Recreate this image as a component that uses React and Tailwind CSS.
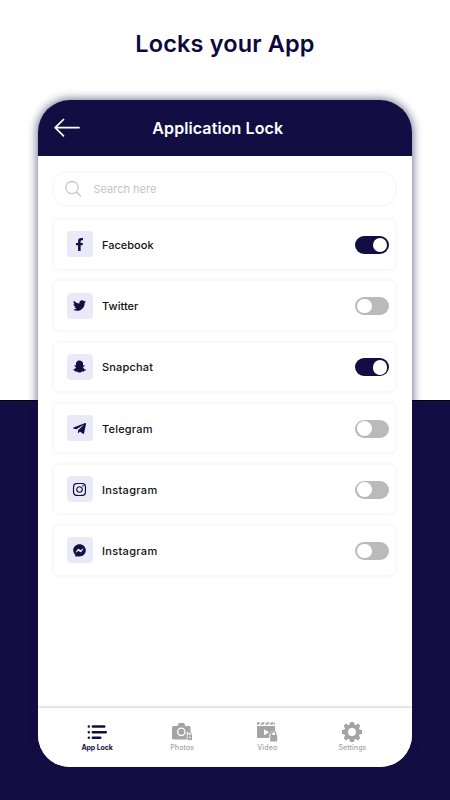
import React from "react";
import { FaFacebookF, FaTwitter, FaSnapchatGhost, FaTelegramPlane, FaInstagram, FaFacebookMessenger } from "react-icons/fa";

const apps = [
  { name: "Facebook", icon: FaFacebookF, on: true, size: 13, tracking: "tracking-[0]" },
  { name: "Twitter", icon: FaTwitter, on: false, size: 13, tracking: "tracking-[0.02px]" },
  { name: "Snapchat", icon: FaSnapchatGhost, on: true, size: 13, tracking: "tracking-[0.17px]" },
  { name: "Telegram", icon: FaTelegramPlane, on: false, size: 15, tracking: "tracking-[0.2px]" },
  { name: "Instagram", icon: FaInstagram, on: false, size: 15, tracking: "tracking-[0.32px]" },
  { name: "Instagram", icon: FaFacebookMessenger, on: false, size: 13, tracking: "tracking-[0.32px]" },
];

function Toggle({ on }) {
  return (
    <div className={"flex h-[18px] w-[34px] items-center rounded-full px-[2px] " + (on ? "justify-end bg-[#120e43]" : "justify-start bg-[#bababa]")}>
      <div className="size-[14.5px] rounded-full bg-white" />
    </div>
  );
}

function AppRow({ app }) {
  const Icon = app.icon;
  return (
    <div className="flex h-[48.5px] items-center rounded-[5px] bg-white pl-[13px] pr-[6px] shadow-[0_0_4px_1px_rgba(0,0,0,0.05)]">
      <div className="flex size-[26px] items-center justify-center rounded-[4px] bg-[#eae9f8] text-[#120e43]">
        <Icon size={app.size} />
      </div>
      <span className={"ml-[9.5px] flex-1 pt-px text-[11px] leading-4 font-medium text-[#111] " + app.tracking}>{app.name}</span>
      <div className="pt-px">
        <Toggle on={app.on} />
      </div>
    </div>
  );
}

function ListIcon() {
  return (
    <svg width="20" height="20" viewBox="0 0 20 20" stroke="#120e43" strokeWidth="2.4" strokeLinecap="round">
      <path d="M1.800 4.500h.01M5.800 4.500h11.500M1.800 10.200h.01M5.800 10.200h13M1.800 15.800h.01M5.800 15.800h7.500" />
    </svg>
  );
}

function CameraIcon() {
  return (
    <svg width="20" height="20" viewBox="0 0 20 20" fill="none">
      <path fill="#a4a4a4" d="M1.500 4h3.800l1.600-3h5l1.600 3h3.800q1.200 0 1.200 1.200V10h-3.800v7.500H1.500Q0 17.500 0 16V5.500Q0 4 1.500 4Z" />
      <circle cx="9.300" cy="9.800" r="3.700" stroke="white" strokeWidth="1.300" />
      <path fill="#a4a4a4" d="M15.500 13h4.500v5h-4.500z" />
      <path stroke="#a4a4a4" d="M16.400 13v-1.300a1.400 1.400 0 0 1 2.800 0V13" />
      <circle cx="17.800" cy="15.400" r=".8" fill="white" />
    </svg>
  );
}

function VideoIcon() {
  return (
    <svg width="21" height="20" viewBox="0 0 21 20" fill="none">
      <path fill="#a4a4a4" d="M0 4h18v12H0z" />
      <path fill="#a4a4a4" d="M0 .3h3.300L1.700 2.800H0zM5 .3h3L6.300 2.800h-3zM9.600 .3h3l-1.700 2.500h-3zM14.200 .3h3l-1.700 2.500h-3zM18 .5v2.300h-1.500z" />
      <path fill="white" d="m7 7.200 5.200 3L7 13.200z" />
      <path fill="white" d="M12.300 12.300h1.300v-.5a3.100 3.100 0 0 1 6.200 0v.5h1.200V20h-8.700z" />
      <path fill="#a4a4a4" d="M13.200 13h7v6.500h-7z" />
      <path stroke="#a4a4a4" strokeWidth="1.300" d="M14.600 13v-1.200a2.100 2.100 0 0 1 4.200 0V13" />
    </svg>
  );
}

function GearIcon() {
  return (
    <svg width="20" height="20" viewBox="0 0 20 20" fill="#a4a4a4">
      <path fillRule="evenodd" d="M8.100 0h3.800l.5 2.500 1.400.6L16 1.600 18.400 4l-1.500 2.200.6 1.400 2.500.5v3.800l-2.500.5-.6 1.400 1.500 2.200-2.400 2.400-2.200-1.500-1.400.6-.5 2.500H8.100l-.5-2.500-1.400-.6L4 18.400 1.600 16l1.500-2.200-.6-1.400L0 11.900V8.100l2.500-.5.600-1.400L1.600 4 4 1.600l2.200 1.500 1.400-.6ZM10 6a4 4 0 1 0 0 8 4 4 0 0 0 0-8Z" />
    </svg>
  );
}

const tabs = [
  { label: "App Lock", icon: ListIcon, style: "font-bold text-[#120e43] tracking-[-0.1px]" },
  { label: "Photos", icon: CameraIcon, style: "font-medium text-[#a4a4a4] tracking-[0.1px]" },
  { label: "Video", icon: VideoIcon, style: "font-medium text-[#a4a4a4] tracking-[0.15px]" },
  { label: "Settings", icon: GearIcon, style: "font-medium text-[#a4a4a4] tracking-[0.1px]" },
];

export default function App() {
  return (
    <div className="h-[800px] w-[450px] overflow-hidden bg-[linear-gradient(to_bottom,#fff_400px,#000_400px,#000_401px,#120e43_401px)] font-['Inter',sans-serif]">
      <h1 className="h-[100px] pt-[28px] text-center text-[23.5px] leading-8 font-semibold tracking-[0.15px] text-[#0d093d]">Locks your App</h1>
      <main className="ml-[37.5px] flex h-[667px] w-[374.5px] flex-col overflow-hidden rounded-[32px] bg-white shadow-[0_0_10px_1px_rgba(18,14,67,0.6)]">
        <header className="flex h-14 shrink-0 items-center bg-[#120e43] px-4 pb-px text-white">
          <svg width="26" height="20" viewBox="0 0 26 20" fill="none" stroke="white" strokeWidth="1.7" strokeLinecap="round" strokeLinejoin="round">
            <path d="M9.500 1.500 1.200 9.700l8.300 8.100M1.500 9.700H25" />
          </svg>
          <h2 className="flex-1 pr-[40px] text-center text-[16px] leading-6 font-semibold tracking-[0.1px]">Application Lock</h2>
        </header>
        <div className="mr-[17px] ml-4 mt-[17px] flex h-8 shrink-0 items-center rounded-[13px] bg-white pl-[10.5px] shadow-[0_0_3px_1px_rgba(0,0,0,0.05)]">
          <svg width="18" height="18" viewBox="0 0 18 18" fill="none" stroke="#c3c3c3" strokeWidth="1.200" strokeLinecap="round">
            <circle cx="8" cy="7.500" r="6.200" />
            <path d="m12.500 12 4 4" />
          </svg>
          <span className="ml-[11.5px] text-[11px] leading-4 text-[#c5c5c5]">Search here</span>
        </div>
        <div className="mr-[17px] ml-4 mt-[15.2px] flex flex-col gap-[12.7px]">
          {apps.map((app, i) => <AppRow key={i} app={app} />)}
        </div>
        <nav className="mt-auto grid h-[59px] shrink-0 grid-cols-4 bg-white px-[17px] pt-[14px] shadow-[0_-1px_3px_rgba(0,0,0,0.2)]">
          {tabs.map(({ label, icon: Icon, style }) => (
            <div key={label} className="flex flex-col items-center">
              <Icon />
              <span className={"mt-[1px] text-[7px] leading-[10px] " + style}>{label}</span>
            </div>
          ))}
        </nav>
      </main>
    </div>
  );
}
